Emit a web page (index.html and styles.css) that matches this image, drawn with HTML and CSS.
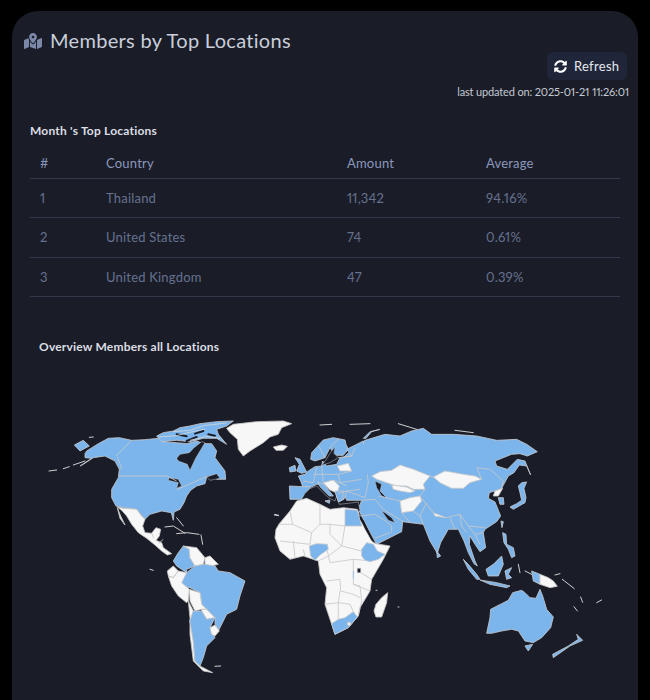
FILE: index.html
```html
<!DOCTYPE html>
<html lang="en">
<head>
<meta charset="utf-8">
<title>Members by Top Locations</title>
<link rel="stylesheet" href="styles.css">
</head>
<body>
<main class="card">
  <header class="card-head">
    <svg class="title-icon" viewBox="0 0 576 512" aria-hidden="true"><path d="M288 0c-69.59 0-126 56.41-126 126 0 56.26 82.35 158.8 113.9 196.02 6.39 7.54 17.82 7.54 24.2 0C331.65 284.8 414 182.26 414 126 414 56.41 357.59 0 288 0zm0 168c-23.2 0-42-18.8-42-42s18.8-42 42-42 42 18.8 42 42-18.8 42-42 42zM20.12 215.95A32.006 32.006 0 0 0 0 245.66v250.32c0 11.32 11.43 19.06 21.94 14.86L160 448V214.92c-8.84-15.98-16.07-31.54-21.25-46.42L20.12 215.95zM288 359.67c-14.07 0-27.38-6.18-36.51-16.96-19.66-23.2-40.57-49.62-59.49-76.72V448l192 64V265.99c-18.92 27.09-39.82 53.52-59.49 76.72-9.13 10.78-22.44 16.96-36.51 16.96zm266.06-198.51L416 224v288l139.88-55.95A31.996 31.996 0 0 0 576 426.34V176.02c0-11.32-11.43-19.06-21.94-14.86z"/></svg>
    <h1 class="title">Members by Top Locations</h1>
  </header>
  <div class="toolbar">
    <button class="refresh" type="button">
      <svg class="refresh-icon" viewBox="0 0 512 512" aria-hidden="true"><path d="M370.72 133.28C339.458 104.008 298.888 87.962 255.848 88c-77.458.068-144.328 53.178-162.791 126.85-1.344 5.363-6.122 9.15-11.651 9.15H24.103c-7.498 0-13.194-6.807-11.807-14.176C33.933 94.924 134.813 8 256 8c66.448 0 126.791 26.136 171.315 68.685L463.03 40.97C478.149 25.851 504 36.559 504 57.941V192c0 13.255-10.745 24-24 24H345.941c-21.382 0-32.09-25.851-16.971-40.971l41.75-41.749zM32 296h134.059c21.382 0 32.09 25.851 16.971 40.971l-41.75 41.75c31.262 29.273 71.835 45.319 114.876 45.28 77.418-.07 144.315-53.144 162.787-126.849 1.344-5.363 6.122-9.15 11.651-9.15h57.304c7.498 0 13.194 6.807 11.807 14.176C478.067 417.076 377.187 504 256 504c-66.448 0-126.791-26.136-171.315-68.685L48.97 471.03C33.851 486.149 8 475.441 8 454.059V320c0-13.255 10.745-24 24-24z"/></svg>
      <span>Refresh</span>
    </button>
    <p class="updated">last updated on: 2025-01-21 11:26:01</p>
  </div>
  <section class="top">
    <h2 class="sub">Month 's Top Locations</h2>
    <table class="locations">
      <colgroup><col class="c1"><col class="c2"><col class="c3"><col class="c4"></colgroup>
      <thead><tr><th>#</th><th>Country</th><th>Amount</th><th>Average</th></tr></thead>
      <tbody>
        <tr><td>1</td><td>Thailand</td><td>11,342</td><td>94.16%</td></tr>
        <tr><td>2</td><td>United States</td><td>74</td><td>0.61%</td></tr>
        <tr><td>3</td><td>United Kingdom</td><td>47</td><td>0.39%</td></tr>
      </tbody>
    </table>
  </section>
  <h2 class="sub overview">Overview Members all Locations</h2>
  <svg class="map" viewBox="12 360 626 340" role="img" aria-label="World map of member locations">
    <g class="amer">
      <polygon class="land" points="590,82 610,70 680,62 760,60 785,68 755,80 745,100 720,108 700,125 660,150 640,165 625,145 622,115 600,95"/>
      <polygon class="land" points="730,138 755,132 772,136 760,148 738,148"/>
      <polygon class="mem" points="380,105 400,95 430,90 450,80 480,75 510,68 560,62 610,60 590,75 560,85 565,100 590,130 560,112 520,112 480,122 440,118 395,122"/>
      <polygon class="mem" points="133,132 160,118 178,135 150,150"/>
      <polygon class="mem" points="165,158 170,150 205,128 235,112 268,110 305,118 345,116 385,112 395,122 440,125 470,128 500,120 520,128 545,128 560,150 555,170 570,190 585,210 587,235 560,235 555,222 530,228 525,248 500,255 482,268 470,285 462,305 450,325 432,333 430,358 424,335 395,330 360,340 345,355 320,325 280,320 258,315 245,290 245,265 265,230 268,205 255,180 225,165 190,170 160,190 150,195 185,172 165,170"/>
      <polygon class="sea" points="440,172 450,160 478,155 492,140 515,122 525,125 510,150 497,172 480,208 472,190 445,180"/>
      <polygon class="sea" points="418,230 445,235 455,255 440,262 445,245 415,238"/>
      <polygon class="sea" points="530,228 560,218 570,232 540,238"/>
      <polyline class="gap" points="440,100 470,106"/>
      <polyline class="gap" points="495,98 520,90"/>
      <polyline class="gap" points="470,120 500,108"/>
      <polyline class="gap" points="535,100 555,104"/>
      <polyline class="thin" points="385,108 440,104 470,96 525,84"/>
      <polyline class="thin" points="430,92 480,88 520,74 590,66"/>
      <polyline class="thin" points="480,118 530,106 570,112"/>
      <polyline class="line" points="258,165 305,118"/>
      <polyline class="line" points="268,225 410,225 440,240"/>
      <polyline class="line" points="440,266 500,240 530,226"/>
      <polyline class="line" points="262,168 275,200 268,205"/>
      <polyline class="isle" points="100,203 118,197"/>
      <polyline class="isle" points="130,192 165,180"/>
      <polyline class="isle" points="57,210 80,207"/>
      <polyline class="isle" points="178,109 190,108"/>
      <polyline class="isle" points="405,378 430,375 465,397"/>
      <polyline class="isle" points="440,398 470,395 507,400"/>
      <polyline class="isle" points="440,350 460,375"/>
      <polyline class="isle" points="555,796 572,795"/>
      <polyline class="isle" points="360,505 370,508"/>
      <polyline class="isle" points="513,402 518,430"/>
      <polyline class="isle" points="733,342 746,344"/>
      <polygon class="land" points="262,318 280,322 320,325 335,345 345,355 338,375 345,395 365,397 378,380 392,385 388,405 378,418 395,425 400,440 425,458 412,462 395,450 375,432 350,412 325,395 305,370 290,345 275,328"/>
      <polygon class="land" points="262,320 272,345 285,372 270,352"/>
      <polygon class="mem" points="430,480 445,455 460,435 478,445 480,470 495,495 470,505 470,515 440,495"/>
      <polygon class="land" points="460,435 500,440 525,470 520,490 495,495 480,470 478,445"/>
      <polygon class="land" points="525,470 540,465 565,490 545,495 525,492"/>
      <polygon class="mem" points="495,495 525,490 555,495 565,510 600,515 645,540 630,585 620,625 590,640 565,690 555,668 555,650 530,625 515,610 510,575 480,560 455,555 455,540 470,515"/>
      <polygon class="land" points="412,510 430,495 445,510 430,530 415,525"/>
      <polygon class="land" points="415,525 430,530 445,510 470,515 455,545 478,565 475,600 470,605 445,585 425,555"/>
      <polygon class="land" points="478,565 510,575 515,610 530,625 515,625 495,630 480,600"/>
      <polygon class="land" points="515,625 530,625 555,650 530,655 515,630"/>
      <polygon class="land" points="475,600 490,630 480,660 490,720 495,780 510,795 548,815 520,810 490,780 480,700 480,650"/>
      <polygon class="mem" points="490,630 515,630 530,655 555,650 540,680 555,710 530,735 520,770 510,795 495,780 490,720 480,660"/>
      <polygon class="land" points="540,680 555,672 568,690 555,705 545,700"/>
      <polyline class="line" points="365,397 372,412"/>
      <polyline class="line" points="385,428 400,415"/>
    </g>
    <g class="asia">
      <polygon class="mem" points="70,170 80,160 105,140 135,118 195,100 240,105 275,90 310,82 335,100 400,100 470,105 530,118 590,115 620,130 652,152 622,165 600,158 575,160 525,180 530,195 562,205 592,175 615,180 632,222 620,195 598,192 582,215 565,225 545,262 530,268 508,275 505,292 525,303 542,345 530,362 495,385 490,395 497,440 480,452 465,430 450,405 448,430 465,480 472,495 462,488 445,455 432,420 415,385 385,385 362,425 352,457 330,420 310,370 270,365 248,362 245,392 170,430 160,412 125,345 115,325 125,298 80,298 70,275 60,240"/>
      <polygon class="sea" points="82,250 125,240 122,265 85,266"/>
      <polygon class="sea" points="165,240 185,250 180,270 200,290 185,285 170,260"/>
      <polygon class="sea" points="185,330 205,358 225,365 215,350 195,335"/>
      <polygon class="land" points="155,225 180,212 215,208 240,192 280,205 330,225 310,250 315,265 280,265 260,255 230,255 200,245 170,235"/>
      <polygon class="land" points="340,228 375,210 430,220 465,225 485,235 450,245 430,262 395,262 360,245"/>
      <polygon class="land" points="215,252 260,258 285,270 270,275 240,270 220,265"/>
      <polygon class="land" points="240,300 270,290 300,285 305,300 280,330 245,335"/>
      <polygon class="land" points="525,270 548,262 535,285 520,285"/>
      <polygon class="land" points="340,335 378,350 345,345"/>
      <polyline class="line" points="330,225 340,228"/>
      <polyline class="line" points="485,235 470,200 510,205 550,240 545,262"/>
      <polyline class="line" points="315,265 300,285 340,335"/>
      <polyline class="line" points="378,350 420,340 445,375 495,380"/>
      <polyline class="line" points="245,335 270,365"/>
      <polyline class="line" points="280,330 300,345 310,370"/>
      <polyline class="line" points="300,345 320,305"/>
      <polyline class="line" points="175,285 240,300"/>
      <polyline class="line" points="165,295 190,325 250,362"/>
      <polyline class="line" points="120,345 165,340 190,355 215,375 215,395"/>
      <polyline class="line" points="165,412 210,395"/>
      <polyline class="line" points="390,350 405,385"/>
      <polyline class="line" points="420,340 425,375 440,395"/>
      <polyline class="line" points="445,375 465,400 480,430"/>
      <polyline class="line" points="465,400 490,395"/>
      <polyline class="line" points="125,298 165,295"/>
      <polygon class="mem" points="570,318 590,308 605,298 600,275 595,255 605,245 620,243 612,262 618,290 615,305 580,325"/>
      <polygon class="mem" points="535,290 550,290 552,310 540,310"/>
      <polygon class="mem" points="543,360 550,362 546,380"/>
      <polygon class="mem" points="548,395 558,400 560,430 580,440 585,465 575,470 565,445 552,425"/>
      <polygon class="mem" points="350,450 362,465 352,470"/>
      <polygon class="mem" points="430,475 445,490 470,520 480,535 470,535 445,505"/>
      <polygon class="mem" points="480,537 530,545 570,555 560,560 510,550"/>
      <polygon class="mem" points="498,505 520,490 545,465 550,490 535,525 505,525"/>
      <polygon class="mem" points="555,510 575,500 565,520 575,530 560,535"/>
      <polygon class="mem" points="635,510 660,520 660,550 640,540"/>
      <polygon class="land" points="660,520 685,530 700,540 712,556 690,560 660,550"/>
      <polygon class="mem" points="500,697 510,650 512,625 545,608 565,598 578,575 605,568 615,575 630,590 648,592 660,565 668,585 680,625 700,648 692,680 665,710 640,725 615,720 595,690 575,685 545,690 515,697"/>
      <polygon class="mem" points="615,735 638,730 625,750"/>
      <polygon class="mem" points="770,700 788,718 750,735 700,770 698,760 745,735 775,715"/>
      <polygon class="mem" points="130,112 150,92 180,85 155,92 138,112"/>
      <polyline class="isle" points="705,522 720,518"/>
      <polyline class="isle" points="727,535 763,563"/>
      <polyline class="isle" points="782,588 788,604"/>
      <polyline class="isle" points="762,617 772,630"/>
      <polyline class="isle" points="830,605 845,597"/>
      <polyline class="isle" points="235,68 290,85"/>
      <polyline class="isle" points="405,88 460,95"/>
      <polyline class="isle" points="90,70 150,68"/>
      <polyline class="isle" points="0,72 35,70"/>
      <polyline class="isle" points="595,490 600,515"/>
      <polyline class="isle" points="615,510 635,520"/>
    </g>
    <g class="euro">
      <polygon class="mem" points="92,130 95,110 115,88 130,72 160,65 195,72 198,85 205,100 190,118 165,118 150,95 135,125 105,135"/>
      <polygon class="mem" points="28,210 68,212 62,195 55,180 75,175 85,165 105,152 125,150 128,135 140,150 170,145 180,125 215,120 200,100 250,75 265,200 255,245 200,225 192,250 175,258 165,225 150,215 125,205 110,205 90,215 75,235 65,250 30,250"/>
      <polygon class="seam" points="235,85 272,85 272,165 250,185 235,185"/>
      <polygon class="sea" points="138,132 150,112 165,92 162,112 175,125 150,140 125,148"/>
      <polygon class="sea" points="65,250 75,232 90,218 110,210 125,225 145,245 165,255 170,240 178,265 205,262 235,258 240,285 120,295 60,285"/>
      <polygon class="land" points="172,150 205,142 215,165 180,165"/>
      <polygon class="land" points="130,200 160,192 178,210 172,232 150,222"/>
      <polygon class="mem" points="45,125 60,130 80,168 65,172 50,165 58,145"/>
      <polygon class="mem" points="28,155 45,148 48,165 30,168"/>
      <polygon class="mem" points="112,198 132,205 160,240 148,240 120,212"/>
      <polygon class="mem" points="165,225 190,225 188,250 175,258"/>
      <polygon class="mem" points="135,255 150,252 148,262"/>
      <polyline class="line" points="115,88 135,125"/>
      <polyline class="line" points="150,95 175,68"/>
      <polyline class="line" points="175,125 215,120 225,95"/>
      <polyline class="line" points="70,195 100,200 110,155"/>
      <polyline class="line" points="100,175 175,175 215,165"/>
      <polyline class="line" points="125,150 130,200"/>
      <polyline class="line" points="65,212 90,212"/>
      <polyline class="line" points="175,175 180,200 245,190"/>
      <polyline class="line" points="160,192 200,210"/>
      <polyline class="line" points="175,232 200,225 240,220"/>
    </g>
    <g class="afr">
      <polygon class="land" points="15,140 18,115 28,98 60,60 80,30 110,22 150,40 180,55 220,50 262,55 272,85 285,115 305,150 318,158 360,165 340,205 305,265 300,300 270,350 265,375 235,410 195,430 185,400 165,340 170,290 150,250 145,210 100,195 60,205 30,180"/>
      <polygon class="mem" points="225,55 262,58 275,105 225,105"/>
      <polygon class="mem" points="118,165 140,158 172,160 175,175 160,185 150,192 135,208 122,195"/>
      <polygon class="mem" points="275,175 290,155 310,160 322,180 345,190 325,205 300,212 285,208 275,195"/>
      <polygon class="mem" points="185,398 205,385 225,380 250,362 262,378 235,410 195,430"/>
      <polygon class="land" points="232,395 240,393 242,402 234,404"/>
      <polygon class="sea" points="262,232 272,232 272,245 262,245"/>
      <polygon class="land" points="335,320 353,305 350,335 335,378 318,378 312,360 318,340"/>
      <polygon class="gulf" points="268,72 282,90 300,130 315,158 305,148 285,112 270,85"/>
      <polyline class="line" points="60,60 68,100 125,125 150,100 150,40"/>
      <polyline class="line" points="25,100 68,100"/>
      <polyline class="line" points="150,100 180,100 180,130 215,165 175,195 145,210"/>
      <polyline class="line" points="180,100 225,105 215,165 275,180"/>
      <polyline class="line" points="125,125 120,160 30,150"/>
      <polyline class="line" points="70,150 75,200"/>
      <polyline class="line" points="100,175 105,195"/>
      <polyline class="line" points="172,180 180,215 250,205 285,208"/>
      <polyline class="line" points="250,205 250,280 300,300"/>
      <polyline class="line" points="170,270 210,265 212,300 250,310 270,320"/>
      <polyline class="line" points="165,340 205,335 205,385"/>
      <polyline class="line" points="205,335 240,340 250,362"/>
      <polyline class="line" points="210,300 205,335"/>
      <polyline class="line" points="272,245 305,265"/>
      <polyline class="line" points="250,280 270,285 275,330 265,375"/>
      <polyline class="water" points="250,240 250,262"/>
      <polyline class="isle" points="14,70 26,73"/>
      <polyline class="isle" points="318,298 321,298"/>
      <polyline class="isle" points="384,348 387,348"/>
    </g>
  </svg>
</main>
</body>
</html>
```
FILE: styles.css
```css
* { box-sizing: border-box; }
html, body { margin: 0; height: 700px; overflow: hidden; background: #000; }
body { padding: 11px 12px 0; font-family: Lato, "Open Sans", sans-serif; font-variant-numeric: proportional-nums; }
.card { background: #1a1d27; border-radius: 26px 26px 0 0; height: 720px; }
.card-head { display: flex; align-items: center; gap: 8px; padding: 18px 12px 0; height: 41px; }
.title-icon { width: 18px; height: 16px; fill: #7c88a8; flex: none; }
.title { margin: 0; font-size: 20px; font-weight: 400; line-height: 23px; color: #c9cedb; letter-spacing: .3px; }
.toolbar { display: flex; flex-direction: column; align-items: flex-end; }
.refresh { display: flex; align-items: center; gap: 7px; height: 28px; width: 80px; margin-right: 11px; padding: 0 0 0 7px; border: 0; border-radius: 6px; background: #20263a; color: #e6e8ee; font: 400 13px/16px Lato, sans-serif; letter-spacing: .3px; }
.refresh-icon { width: 13px; height: 13px; fill: #fff; flex: none; }
.updated { margin: 4px 9px 0 0; font-size: 11px; line-height: 16px; color: #c5c9d3; letter-spacing: -.15px; }
.top { padding: 0 18px; }
.sub { margin: 23px 0 0; font-size: 12px; line-height: 16px; font-weight: 700; color: #dcdee4; letter-spacing: .2px; }
.overview { margin: 42px 0 0 27px; }
.locations { width: 590px; border-collapse: collapse; table-layout: fixed; font-size: 13px; letter-spacing: .2px; }
.c1 { width: 66px; }
.c2 { width: 241px; }
.c3 { width: 139px; }
.c4 { width: 144px; }
.locations th, .locations td { padding: 0 10px; text-align: left; border-bottom: 1px solid #33384a; }
.locations th { height: 39px; font-weight: 400; color: #8a97bd; padding-top: 9px; }
.locations td { height: 39.6px; font-weight: 400; color: #667190; }
.map { display: block; width: 626px; height: 340px; margin-top: 6px; }
.amer { transform: translate(30px, 400px) scale(.3333); }
.asia { transform: translate(320px, 400px) scale(.3333); }
.euro { transform: translate(280px, 415px) scale(.3333); }
.afr { transform: translate(270px, 490px) scale(.3333); }
.mem { fill: #7cb5ec; stroke: #c4c8cc; stroke-width: 2.5; stroke-linejoin: round; }
.seam { fill: #7cb5ec; }
.land { fill: #f7f7f7; stroke: #c8c8c8; stroke-width: 2.5; stroke-linejoin: round; }
.sea { fill: #1a1d27; stroke: #c4c8cc; stroke-width: 1.5; stroke-linejoin: round; }
.gulf { fill: #1a1d27; }
.line { fill: none; stroke: #c8c8c8; stroke-width: 2.5; stroke-linejoin: round; }
.thin { fill: none; stroke: #d4d6d8; stroke-width: 2.5; stroke-linejoin: round; }
.gap { fill: none; stroke: #1a1d27; stroke-width: 6; stroke-linecap: round; }
.isle { fill: none; stroke: #cfcfcf; stroke-width: 3; stroke-linecap: round; }
.water { fill: none; stroke: #7cb5ec; stroke-width: 2; }
```
